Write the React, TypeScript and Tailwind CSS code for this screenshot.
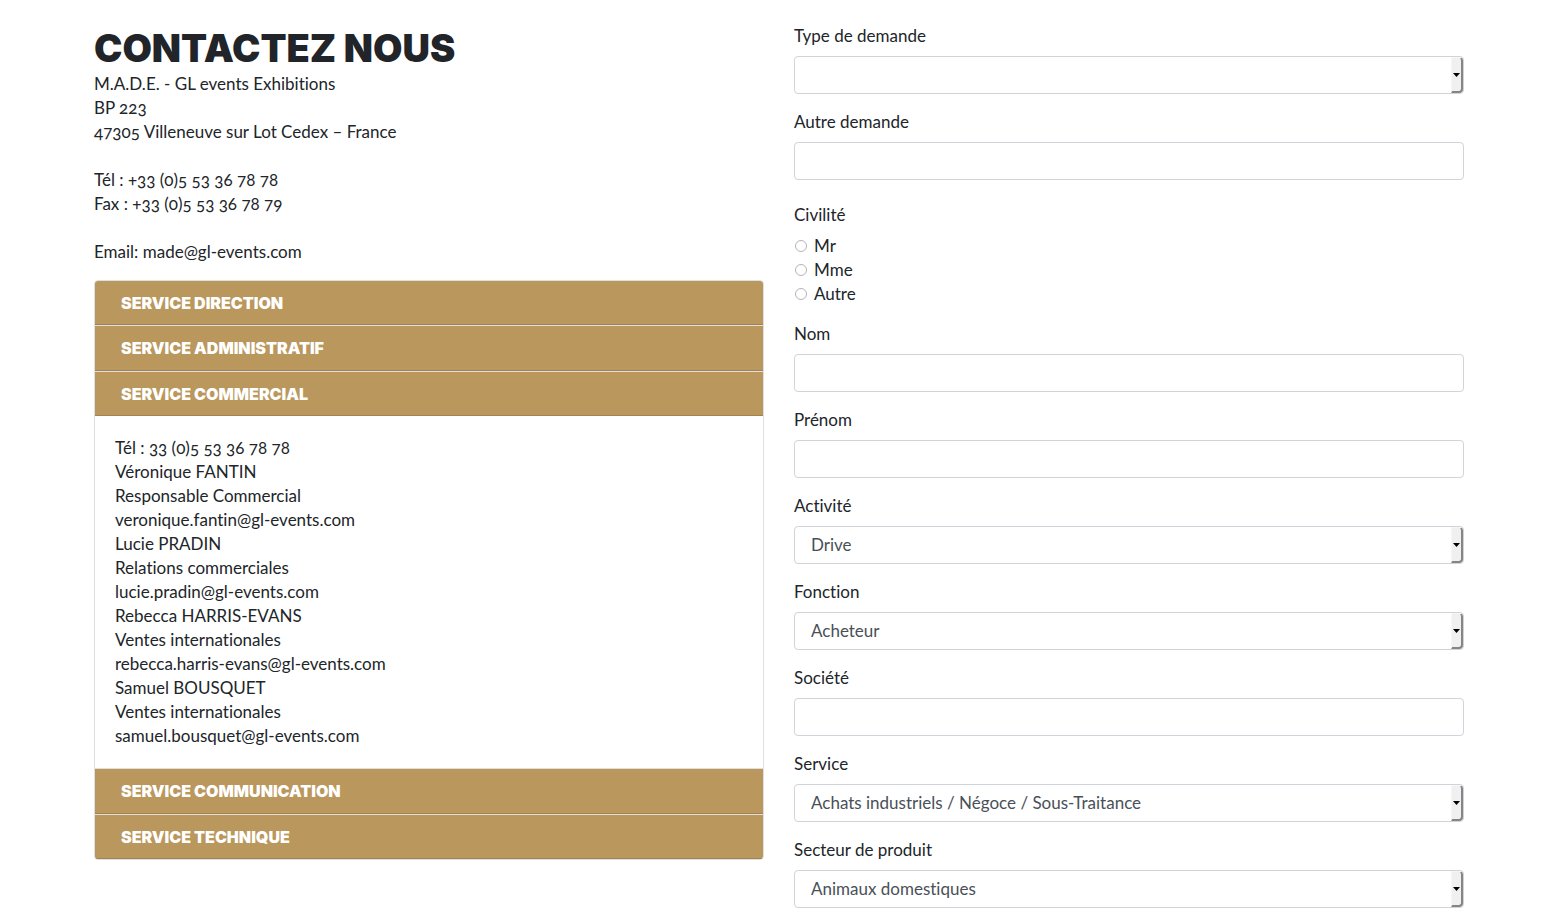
import { useState } from "react";

type Service = { name: string; lines: string[] };

const services: Service[] = [
  { name: "Service direction", lines: ["Tél : 33 (0)5 53 36 78 78"] },
  { name: "Service administratif", lines: ["Tél : 33 (0)5 53 36 78 78"] },
  {
    name: "Service commercial",
    lines: [
      "Tél : 33 (0)5 53 36 78 78",
      "Véronique FANTIN",
      "Responsable Commercial",
      "veronique.fantin@gl-events.com",
      "Lucie PRADIN",
      "Relations commerciales",
      "lucie.pradin@gl-events.com",
      "Rebecca HARRIS-EVANS",
      "Ventes internationales",
      "rebecca.harris-evans@gl-events.com",
      "Samuel BOUSQUET",
      "Ventes internationales",
      "samuel.bousquet@gl-events.com",
    ],
  },
  { name: "Service communication", lines: ["Tél : 33 (0)5 53 36 78 78"] },
  { name: "Service technique", lines: ["Tél : 33 (0)5 53 36 78 78"] },
];

function Accordion() {
  const [open, setOpen] = useState(2);
  return (
    <ul className="mt-4 divide-y divide-[#dfdfdf] overflow-hidden rounded-sm border border-[#dfdfdf]">
      {services.map((service, i) => (
        <li key={service.name} className="group">
          <h2>
            <button
              type="button"
              aria-expanded={open === i}
              onClick={() => setOpen(open === i ? -1 : i)}
              className="flex h-11 w-full items-center border-b border-[#a28350] bg-[#ba975c] px-[26px] text-left font-['Inter',sans-serif] text-[16px] font-black text-white uppercase group-even:h-[45px]"
            >
              {service.name}
            </button>
          </h2>
          {open === i && (
            <div className="p-5">
              {service.lines.map((line, n) => (
                <p key={n}>{line}</p>
              ))}
            </div>
          )}
        </li>
      ))}
    </ul>
  );
}

const control =
  "block h-[38px] w-full rounded border border-[#ced4da] bg-white text-[#495057]";

function TextField({ id, label }: { id: string; label: string }) {
  return (
    <div className="flex flex-col gap-2">
      <label htmlFor={id}>{label}</label>
      <input id={id} type="text" className={`${control} px-3`} />
    </div>
  );
}

function SelectField({ id, label, options }: { id: string; label: string; options: string[] }) {
  return (
    <div className="flex flex-col gap-2">
      <label htmlFor={id}>{label}</label>
      <div className="relative">
        <select id={id} className={`${control} appearance-none pr-6 pl-4`}>
          {options.map((option) => (
            <option key={option}>{option}</option>
          ))}
        </select>
        <span className="pointer-events-none absolute inset-y-px right-px flex w-3 items-center justify-center rounded-r-sm border-t border-r-2 border-b-2 border-l border-t-[#f6f6f6] border-r-[#858585] border-b-[#858585] border-l-[#f6f6f6] bg-[#f0f0f0]">
          <svg width="7" height="4" viewBox="0 0 7 4" aria-hidden="true">
            <path d="M0 0h7L3.5 4z" fill="#000" />
          </svg>
        </span>
      </div>
    </div>
  );
}

export default function App() {
  return (
    <main className="bg-white px-6 pt-6 pb-3 font-['Lato','Open_Sans',sans-serif] text-[17px] leading-6 text-[#212529] oldstyle-nums [font-variant-ligatures:none]">
      <div className="mx-auto grid max-w-[1373px] gap-[30px] pr-[3px] md:grid-cols-2">
        <section>
          <h1 className="font-['Inter',sans-serif] text-[38px] leading-12 font-black uppercase">Contactez nous</h1>
          <address className="not-italic">
            <p>M.A.D.E. - GL events Exhibitions</p>
            <p>BP 223</p>
            <p>47305 Villeneuve sur Lot Cedex – France</p>
            <p className="mt-6">Tél : +33 (0)5 53 36 78 78</p>
            <p>Fax : +33 (0)5 53 36 78 79</p>
            <p className="mt-6">Email: made@gl-events.com</p>
          </address>
          <Accordion />
        </section>

        <form className="flex flex-col gap-4">
          <SelectField id="type" label="Type de demande" options={[""]} />
          <TextField id="autre" label="Autre demande" />
          <fieldset>
            <legend className="py-[7px]">Civilité</legend>
            {["Mr", "Mme", "Autre"].map((title) => (
              <label key={title} className="flex items-center gap-[7px]">
                <input
                  type="radio"
                  name="civilite"
                  className="ml-px size-3 appearance-none rounded-full border border-[#b4b4b4] bg-white checked:border-4 checked:border-[#495057]"
                />
                {title}
              </label>
            ))}
          </fieldset>
          <TextField id="nom" label="Nom" />
          <TextField id="prenom" label="Prénom" />
          <SelectField id="activite" label="Activité" options={["Drive"]} />
          <SelectField id="fonction" label="Fonction" options={["Acheteur"]} />
          <TextField id="societe" label="Société" />
          <SelectField id="service" label="Service" options={["Achats industriels / Négoce / Sous-Traitance"]} />
          <SelectField id="secteur" label="Secteur de produit" options={["Animaux domestiques"]} />
        </form>
      </div>
    </main>
  );
}
